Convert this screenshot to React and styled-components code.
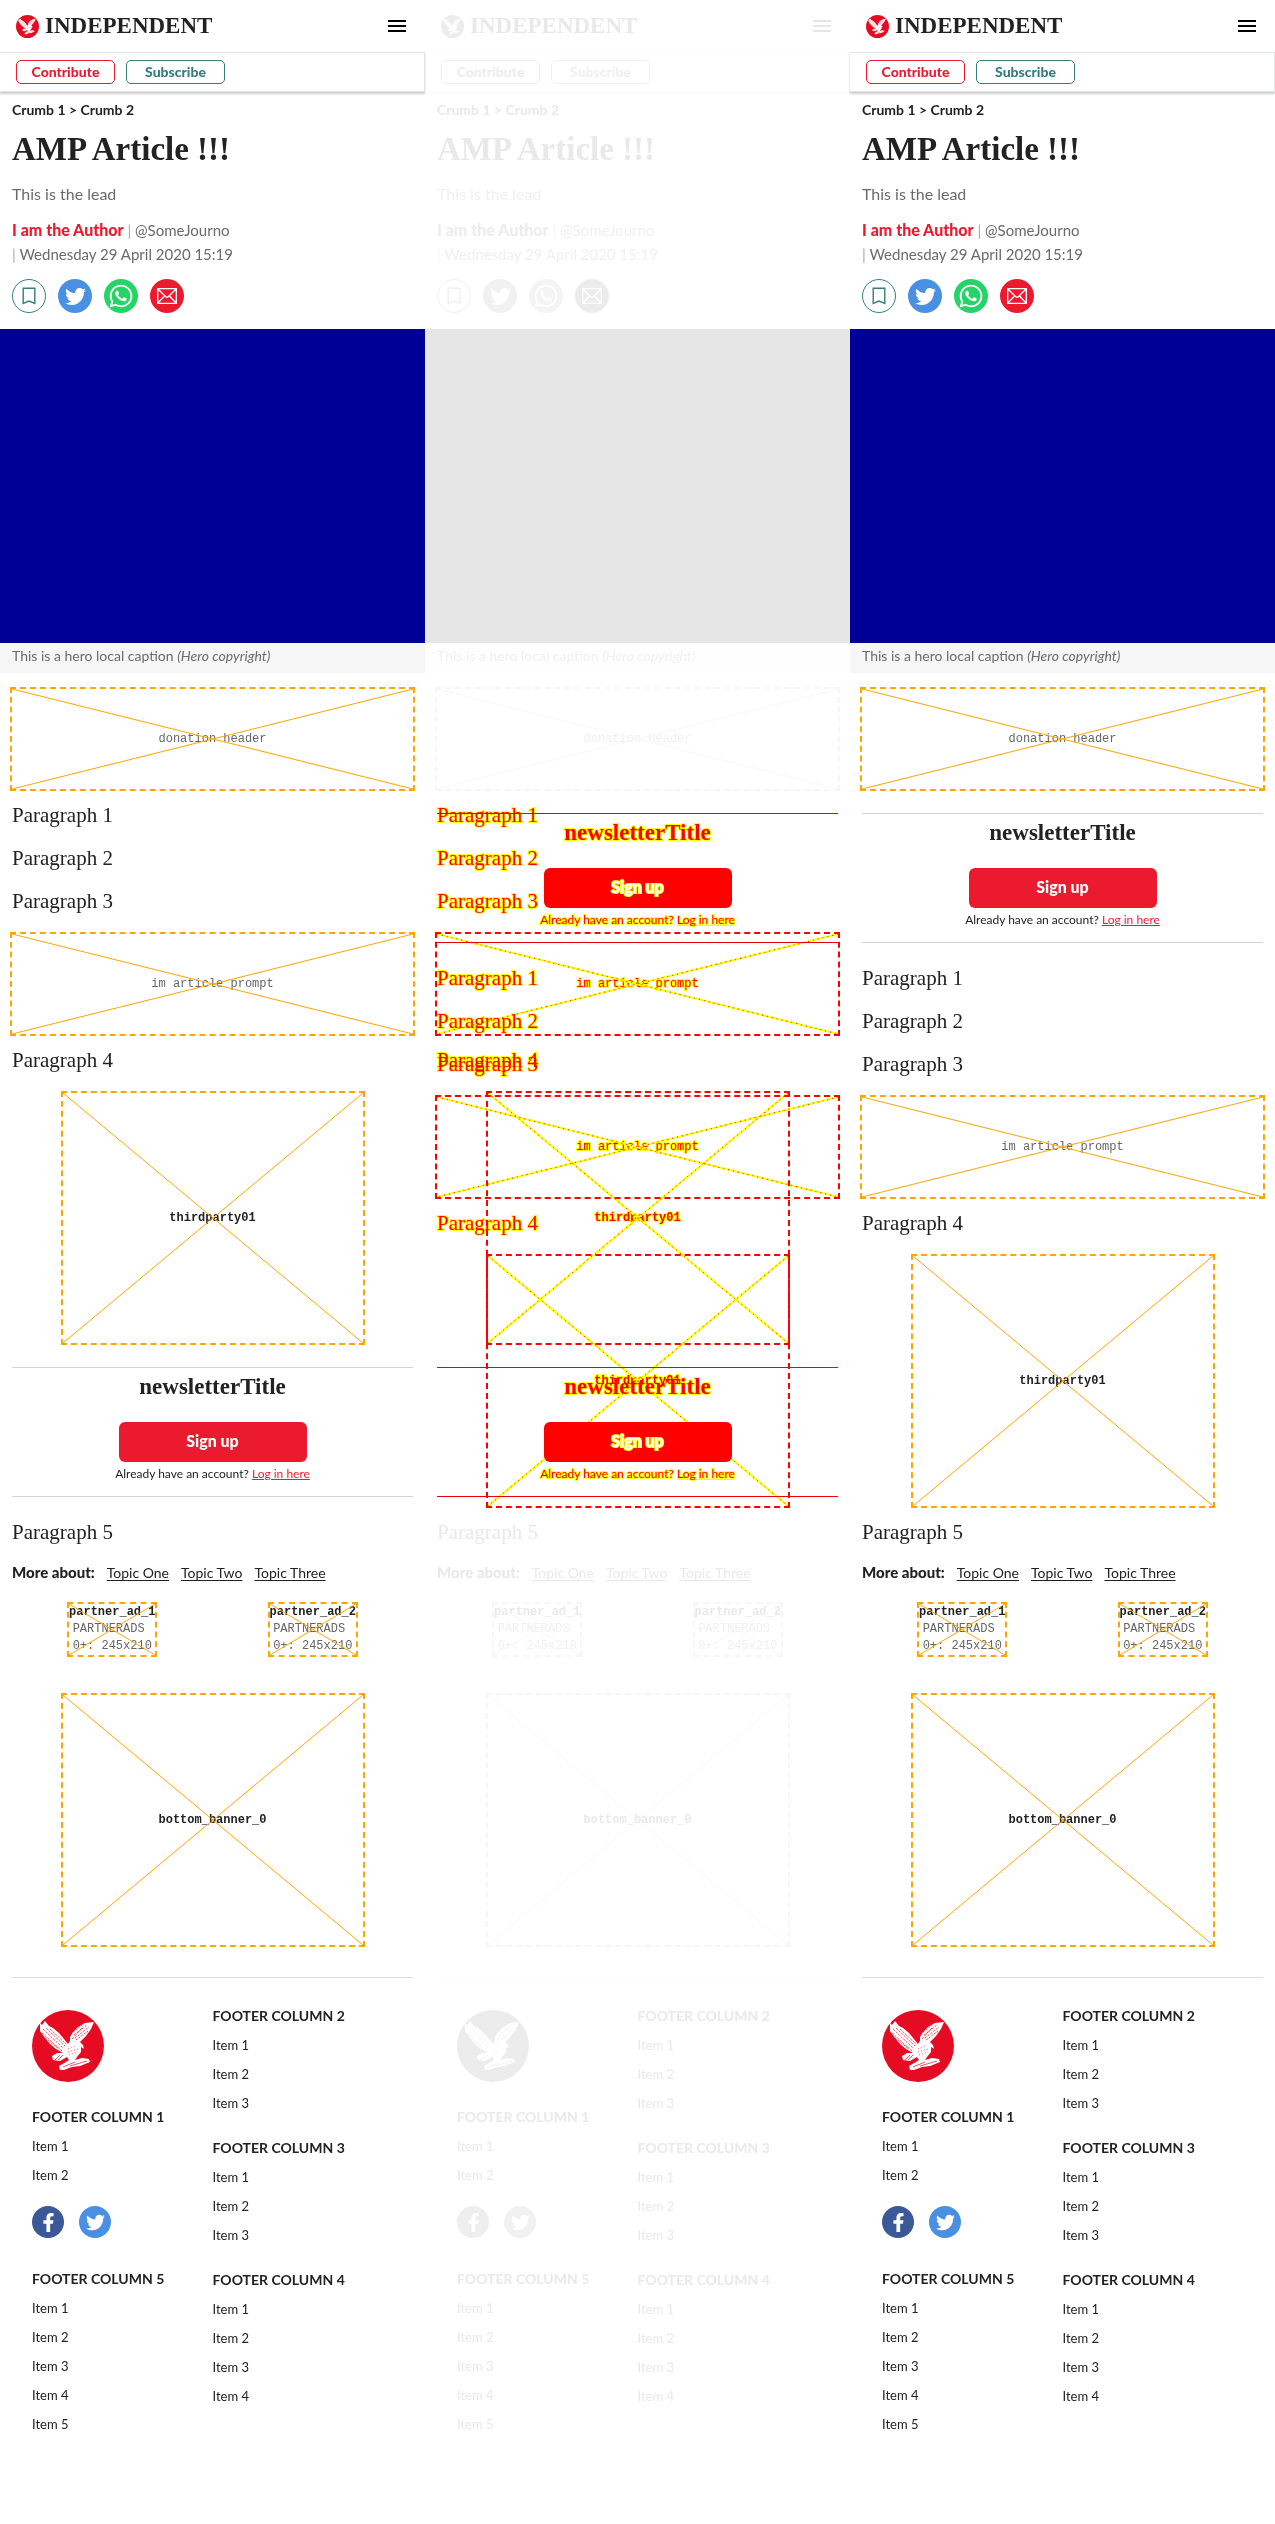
import React from "react";
import styled, { createGlobalStyle, css } from "styled-components";
import { FaTwitter, FaFacebookF, FaWhatsapp } from "react-icons/fa";

const sans = `Lato, "Open Sans", sans-serif`;
const serif = `"Liberation Serif", "Times New Roman", serif`;
const mono = `"Liberation Mono", "Courier New", monospace`;

const live = {
  text: "#222222", muted: "#6b6b6b", divider: "#aaaaaa", red: "#ec1a2e", badge: "#e50b22",
  teal: "#347e80", twitter: "#4990e2", whatsapp: "#25d366", facebook: "#3b5998",
  menu: "#000000", bar: "#e3e6e6", barShadow: "rgba(0,0,0,0.2)", hero: "#000096",
  captionBg: "#f6f6f6", slot: "#ffa500", slotText: "#666666", slotTitle: "#222222",
  rule: "#d3d3d3", footRule: "#d5dfe2",
};

const ghost = {
  ...live,
  text: "#e9e9e9", muted: "#f0f0f0", divider: "#f5f5f5", red: "#ececec", badge: "#ececec",
  teal: "#f0f0f0", twitter: "#f1f1f1", whatsapp: "#f4f4f4", facebook: "#eeeeee",
  menu: "#e6e6e6", bar: "#fcfcfc", barShadow: "rgba(0,0,0,0.02)", hero: "#e6e6e6",
  captionBg: "#fefefe", slot: "#f6f6f6", slotText: "#f0f0f0", slotTitle: "#e9e9e9",
  rule: "#fbfbfb", footRule: "#fbfbfb",
};

const diff = {
  ...live,
  diff: true,
  text: "#ff0000", muted: "#ff0000", red: "#ff0000", slot: "#ff0000",
  slotText: "#ff0000", slotTitle: "#ff0000", rule: "#e8000f",
};

const Global = createGlobalStyle`
  *, *::before, *::after { box-sizing: border-box; }
  body { margin: 0; background: #ffffff; }
  h1, h2, h3, p, ul { margin: 0; padding: 0; font-weight: normal; }
  ul { list-style: none; }
  a { color: inherit; text-decoration: none; }
`;

const outlined = css`
  ${(p) => p.$t.diff && "-webkit-text-stroke: 2px #ffff00; paint-order: stroke fill;"}
`;

const Board = styled.main`
  display: grid;
  grid-template-columns: repeat(3, 1fr);
`;
const Page = styled.section`
  display: flex;
  flex-direction: column;
  min-width: 0;
  padding-bottom: 88px;
  font: 14px/20px ${sans};
  color: ${(p) => p.$t.text};
`;
const Header = styled.header`
  height: 52px;
  padding: 0 16px;
  display: flex;
  align-items: center;
  justify-content: space-between;
`;
const Brand = styled.a`
  display: flex;
  align-items: center;
  gap: 6px;
  font: bold 23px/24px ${serif};
`;
const MenuButton = styled.button`
  width: 24px;
  height: 24px;
  padding: 0 3px;
  border: 0;
  background: none;
  display: flex;
  flex-direction: column;
  justify-content: center;
  gap: 3px;
`;
const MenuLine = styled.span`
  height: 2px;
  background: ${(p) => p.$t.menu};
`;
const Actions = styled.nav`
  height: 40px;
  padding: 0 16px;
  display: flex;
  align-items: center;
  gap: 11px;
  border: 1px solid ${(p) => p.$t.bar};
  border-left: 0;
  box-shadow: 0 2px 2px ${(p) => p.$t.barShadow};
`;
const ActionButton = styled.button`
  width: 99px;
  height: 24px;
  padding: 0;
  border: 1px solid ${(p) => p.$color};
  border-radius: 5px;
  background: none;
  color: ${(p) => p.$color};
  font: 900 14px/20px ${sans};
`;
const Intro = styled.div`
  height: 237px;
  padding: 8px 12px 0;
`;
const Crumbs = styled.nav`
  font-weight: bold;
`;
const Title = styled.h1`
  padding: 9px 0;
  font: bold 33px/40px ${serif};
`;
const Lead = styled.p`
  padding: 4px 0 12px;
  font-size: 16px;
  line-height: 24px;
  color: ${(p) => p.$t.muted};
`;
const Byline = styled.p`
  font-size: 15px;
  line-height: 24px;
  color: ${(p) => p.$t.muted};
`;
const Author = styled.a`
  font-size: 16px;
  font-weight: 900;
  color: ${(p) => p.$t.red};
`;
const Divider = styled.span`
  color: ${(p) => p.$t.divider};
`;
const Row = styled.div`
  display: flex;
  gap: ${(p) => p.$gap}px;
  padding-top: ${(p) => p.$top}px;
`;
const RoundLink = styled.a`
  width: ${(p) => p.$size}px;
  height: ${(p) => p.$size}px;
  border-radius: 50%;
  display: flex;
  align-items: center;
  justify-content: center;
  color: #ffffff;
  ${(p) => (p.$ring ? `border: 1px solid ${p.$ring};` : `background: ${p.$fill};`)}
`;
const Hero = styled.div`
  height: 314px;
  background: ${(p) => p.$t.hero};
`;
const Caption = styled.p`
  height: 30px;
  padding: 3px 12px;
  background: ${(p) => p.$t.captionBg};
  color: ${(p) => p.$t.muted};
`;
const Body = styled.div`
  display: flex;
  flex-direction: column;
  padding: 0 12px;
`;
const Layers = styled.div`
  display: grid;
`;
const Layer = styled.div`
  grid-area: 1 / 1;
  min-width: 0;
  mix-blend-mode: multiply;
`;
const Paragraph = styled.p`
  margin: 11px 0 5px;
  font: 21px/27px ${serif};
  color: ${(p) => p.$t.text};
  ${outlined}
`;
const WideSlot = styled.div`
  position: relative;
  height: 104px;
  margin: ${(p) => p.$top}px -2px 0;
  border: 2px dashed ${(p) => p.$t.slot};
  display: flex;
  align-items: center;
  justify-content: center;
`;
const SquareSlot = styled(WideSlot)`
  width: 304px;
  height: 254px;
  margin: ${(p) => p.$top}px auto 0;
`;
const PartnerSlot = styled(WideSlot)`
  width: 90px;
  height: 55px;
  margin: 0 auto;
  flex-direction: column;
`;
const Cross = styled.svg`
  position: absolute;
  inset: 0;
  width: 100%;
  height: 100%;
`;
const SlotTitle = styled.strong`
  font: bold 12px/17px ${mono};
  color: ${(p) => p.$t.slotTitle};
  ${outlined}
`;
const SlotText = styled.span`
  font: 12px/17px ${mono};
  color: ${(p) => p.$t.slotText};
  ${outlined}
`;
const Newsletter = styled.section`
  height: 130px;
  margin: 22px 0 11px;
  padding: 7px 0 0;
  border: solid ${(p) => p.$t.rule};
  border-width: 1px 0;
  display: flex;
  flex-direction: column;
  align-items: center;
`;
const NewsTitle = styled.h2`
  font: bold 23px/24px ${serif};
  color: ${(p) => p.$t.text};
  ${outlined}
`;
const SignUp = styled.button`
  width: 188px;
  height: 40px;
  margin: 23px 0 3px;
  padding: 0 0 2px;
  border: 0;
  border-radius: 6px;
  background: ${(p) => p.$t.red};
  color: #ffffff;
  font: 900 16px/24px ${sans};
  ${outlined}
`;
const Account = styled.p`
  font-size: 12px;
  line-height: 17px;
  color: ${(p) => p.$t.text};
  white-space: nowrap;
  ${outlined}
`;
const LogIn = styled.a`
  color: ${(p) => p.$t.red};
  text-decoration: underline;
`;
const Topics = styled.nav`
  display: flex;
  align-items: baseline;
  gap: 12px;
  padding: 11px 0 19px;
`;
const TopicsLabel = styled.strong`
  font-size: 15px;
  font-weight: 900;
`;
const Topic = styled.a`
  text-decoration: underline;
  text-underline-offset: 2px;
`;
const Partners = styled.div`
  display: grid;
  grid-template-columns: 1fr 1fr;
`;
const Footer = styled.footer`
  margin: 30px 12px 0;
  padding-top: 23px;
  border-top: 1px solid ${(p) => p.$t.footRule};
  display: grid;
  grid-template-columns: 1fr 1fr;
`;
const FooterSide = styled.div`
  padding-left: ${(p) => p.$indent || 0}px;
`;
const FooterLogo = styled.a`
  display: block;
  width: 72px;
  margin: 9px 0 20px;
`;
const LinkGroup = styled.section`
  margin-bottom: ${(p) => p.$gap}px;
`;
const GroupTitle = styled.h3`
  font-size: 14px;
  line-height: 30px;
  font-weight: bold;
`;
const Item = styled.li`
  font-size: 13px;
  line-height: 29px;
`;
const Badge = styled.svg`
  display: block;
  flex: none;
`;

function Eagle({ size, t }) {
  return (
    <Badge width={size} height={size} viewBox="0 0 72 72" aria-hidden="true">
      <circle cx="36" cy="36" r="36" fill={t.badge} />
      <g fill="#ffffff">
        <path d="M8 13 L10 15 13 11 17 16 21 18 27 23 32 29 36 34 38 31 38 27 41 22 46 17 53 13 62 12 59 19 54 26 48 32 51 35 52 39 49 37 49 42 45 47 43 50 50 48 57 49 58 52 48 56 40 57 32 60 28 60 27 56 34 52 37 50 35 47 28 51 21 50 20 46 25 43 31 43 24 39 18 34 13 28 8 21Z" />
      </g>
      <g stroke={t.badge} strokeWidth="0.7" fill="none">
        <path d="M11 19 L31 38 M10 23 L30 41 M14 18 L33 36 M18 19 L34 34 M13 28 L27 39" strokeDasharray="2.5 1" />
        <path d="M42 25 L55 15 M43 28 L57 17 M44 30 L56 21 M40 29 L50 18 M41 22 L50 15" strokeWidth="1" strokeDasharray="1 1" />
        <path d="M36 39 L44 36 M36 42 L46 39 M37 45 L46 42" strokeDasharray="1 2" />
        <path d="M23 50 L28 45 M26 50 L31 45 M31 57 L43 52 M38 56 L55 51" />
      </g>
    </Badge>
  );
}

function CrossLines({ t }) {
  return (
    <Cross viewBox="0 0 100 100" preserveAspectRatio="none" aria-hidden="true">
      <path d="M0 0 L100 100 M100 0 L0 100" fill="none" stroke={t.diff ? "#ffff00" : t.slot} strokeWidth={t.diff ? 2 : 1} vectorEffect="non-scaling-stroke" />
      {t.diff && (
        <path d="M0 0 L100 100 M100 0 L0 100" fill="none" stroke="#ff0000" strokeWidth="1" strokeDasharray="1 4" vectorEffect="non-scaling-stroke" />
      )}
    </Cross>
  );
}

function Wide({ t, top, children }) {
  return (
    <WideSlot $t={t} $top={top}>
      <SlotText $t={t}>{children}</SlotText>
      <CrossLines t={t} />
    </WideSlot>
  );
}

function Square({ t, top, children }) {
  return (
    <SquareSlot $t={t} $top={top}>
      <CrossLines t={t} />
      <SlotTitle $t={t}>{children}</SlotTitle>
    </SquareSlot>
  );
}

function News({ t }) {
  return (
    <Newsletter $t={t}>
      <NewsTitle $t={t}>newsletterTitle</NewsTitle>
      <SignUp $t={t}>Sign up</SignUp>
      <Account $t={t}>
        Already have an account? <LogIn $t={t} href="#login">Log in here</LogIn>
      </Account>
    </Newsletter>
  );
}

function Story({ t, newsFirst }) {
  return (
    <Body>
      {newsFirst && <News t={t} />}
      <Paragraph $t={t}>Paragraph 1</Paragraph>
      <Paragraph $t={t}>Paragraph 2</Paragraph>
      <Paragraph $t={t}>Paragraph 3</Paragraph>
      <Wide t={t} top={12}>im article prompt</Wide>
      <Paragraph $t={t}>Paragraph 4</Paragraph>
      <Square t={t} top={12}>thirdparty01</Square>
      {!newsFirst && <News t={t} />}
    </Body>
  );
}

function Group({ title, count, gap = 15 }) {
  return (
    <LinkGroup $gap={gap}>
      <GroupTitle>{title}</GroupTitle>
      <ul>
        {Array.from({ length: count }, (_, i) => (
          <Item key={i}><a href="#item">Item {i + 1}</a></Item>
        ))}
      </ul>
    </LinkGroup>
  );
}

function Article({ t, children }) {
  return (
    <Page $t={t}>
      <Header>
        <Brand href="#home"><Eagle size={23} t={t} />INDEPENDENT</Brand>
        <MenuButton aria-label="Menu">
          <MenuLine $t={t} /><MenuLine $t={t} /><MenuLine $t={t} />
        </MenuButton>
      </Header>
      <Actions $t={t}>
        <ActionButton $color={t.red}>Contribute</ActionButton>
        <ActionButton $color={t.teal}>Subscribe</ActionButton>
      </Actions>
      <Intro>
        <Crumbs>Crumb 1 &gt; Crumb 2</Crumbs>
        <Title>AMP Article !!!</Title>
        <Lead $t={t}>This is the lead</Lead>
        <Byline $t={t}>
          <Author $t={t} href="#author">I am the Author</Author> <Divider $t={t}>|</Divider> @SomeJourno
        </Byline>
        <Byline $t={t}><Divider $t={t}>|</Divider> Wednesday 29 April 2020 15:19</Byline>
        <Row $gap={12} $top={13}>
          <RoundLink $size={34} $ring={t.teal} href="#save" aria-label="Save">
            <svg width="14" height="18" viewBox="0 0 14 18" fill="none" stroke={t.teal} strokeWidth="1.4"><path d="M1.2 1.2 H12.8 V16.5 L7 14 L1.2 16.5Z" /></svg>
          </RoundLink>
          <RoundLink $size={34} $fill={t.twitter} href="#twitter" aria-label="Twitter"><FaTwitter size={21} /></RoundLink>
          <RoundLink $size={34} $fill={t.whatsapp} href="#whatsapp" aria-label="WhatsApp"><FaWhatsapp size={26} /></RoundLink>
          <RoundLink $size={34} $fill={t.red} href="#mail" aria-label="Email">
            <svg width="20" height="16" viewBox="0 0 20 16" fill="none" stroke="#ffffff" strokeWidth="1.3"><path d="M0.7 0.7 H19.3 V15.3 H0.7Z M0.7 0.7 L8.5 8.5 Q10 10 11.5 8.5 L19.3 0.7 M0.7 15.3 L7.5 8 M19.3 15.3 L12.5 8" /></svg>
          </RoundLink>
        </Row>
      </Intro>
      <Hero $t={t} />
      <Caption $t={t}>This is a hero local caption <em>(Hero copyright)</em></Caption>
      <Body><Wide t={t} top={14}>donation header</Wide></Body>
      {children}
      <Body>
        <Paragraph $t={t}>Paragraph 5</Paragraph>
        <Topics>
          <TopicsLabel>More about:</TopicsLabel>
          <Topic href="#one">Topic One</Topic>
          <Topic href="#two">Topic Two</Topic>
          <Topic href="#three">Topic Three</Topic>
        </Topics>
        <Partners>
          {[1, 2].map((n) => (
            <PartnerSlot key={n} $t={t}>
              <CrossLines t={t} />
              <SlotTitle $t={t}>partner_ad_{n}</SlotTitle>
              <SlotText $t={t}>PARTNERADS<br />0+: 245x210</SlotText>
            </PartnerSlot>
          ))}
        </Partners>
        <Square t={t} top={36}>bottom_banner_0</Square>
      </Body>
      <Footer $t={t}>
        <FooterSide $indent={20}>
          <FooterLogo href="#home" aria-label="Independent"><Eagle size={72} t={t} /></FooterLogo>
          <Group title="FOOTER COLUMN 1" count={2} gap={0} />
          <Row $gap={15} $top={16}>
            <RoundLink $size={32} $fill={t.facebook} href="#facebook" aria-label="Facebook"><FaFacebookF size={19} /></RoundLink>
            <RoundLink $size={32} $fill={t.twitter} href="#twitter" aria-label="Twitter"><FaTwitter size={19} /></RoundLink>
          </Row>
          <Row $gap={0} $top={26}><Group title="FOOTER COLUMN 5" count={5} gap={0} /></Row>
        </FooterSide>
        <FooterSide>
          <Group title="FOOTER COLUMN 2" count={3} />
          <Group title="FOOTER COLUMN 3" count={3} />
          <Group title="FOOTER COLUMN 4" count={4} />
        </FooterSide>
      </Footer>
    </Page>
  );
}

export default function App() {
  return (
    <>
      <Global />
      <Board>
        <Article t={live}><Story t={live} /></Article>
        <Article t={ghost}>
          <Layers>
            <Layer><Story t={diff} /></Layer>
            <Layer><Story t={diff} newsFirst /></Layer>
          </Layers>
        </Article>
        <Article t={live}><Story t={live} newsFirst /></Article>
      </Board>
    </>
  );
}
